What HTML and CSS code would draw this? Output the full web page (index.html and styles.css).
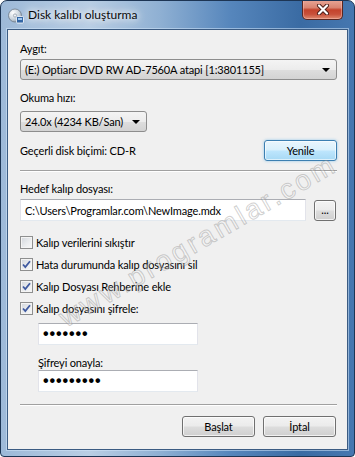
FILE: index.html
```html
<!DOCTYPE html>
<html lang="tr">
<head>
    <meta charset="UTF-8">
    <meta name="viewport" content="width=device-width, initial-scale=1.0">
    <title>Disk kalıbı oluşturma</title>
    <link rel="stylesheet" href="styles.css">
</head>
<body>
    <div class="window">
        <div class="titlebar">
            <svg class="app-icon" width="16" height="16" viewBox="0 0 16 16">
                <defs>
                    <radialGradient id="disc" cx="0.35" cy="0.3" r="0.8">
                        <stop offset="0" stop-color="#ffffff"/>
                        <stop offset="0.6" stop-color="#c9d3dc"/>
                        <stop offset="1" stop-color="#8b98a6"/>
                    </radialGradient>
                </defs>
                <circle cx="7" cy="7.5" r="6.5" fill="url(#disc)" stroke="#6d7a88" stroke-width="0.8"/>
                <circle cx="7" cy="7.5" r="1.6" fill="#eef2f6" stroke="#7d8a97" stroke-width="0.6"/>
                <rect x="8.5" y="8.5" width="7" height="6.5" rx="1" fill="#2f63a3" stroke="#ffffff" stroke-width="0.8"/>
                <rect x="10" y="10" width="4" height="2" fill="#9cc6f0"/>
            </svg>
            <span class="title">Disk kalıbı oluşturma</span>
            <div class="close-btn">
                <svg width="14" height="11" viewBox="0 0 14 11">
                    <path d="M3 1.5 L11 9.5 M11 1.5 L3 9.5" stroke="#4a1d17" stroke-width="4" stroke-linecap="round"/>
                    <path d="M3 1.5 L11 9.5 M11 1.5 L3 9.5" stroke="#ffffff" stroke-width="2.2" stroke-linecap="round"/>
                </svg>
            </div>
        </div>

        <div class="client">
            <div class="label">Aygıt:</div>
            <div class="combo combo-drive">
                <span>(E:) Optiarc DVD RW AD-7560A atapi [1:3801155]</span>
                <i class="arrow"></i>
            </div>

            <div class="label label-speed">Okuma hızı:</div>
            <div class="combo combo-speed">
                <span>24.0x (4234 KB/San)</span>
                <i class="arrow"></i>
            </div>

            <div class="format-row">
                <span>Geçerli disk biçimi: CD-R</span>
                <div class="btn btn-focus">Yenile</div>
            </div>

            <div class="sep"></div>

            <div class="label label-target">Hedef kalıp dosyası:</div>
            <div class="path-row">
                <div class="textbox path-box">C:\Users\Programlar.com\NewImage.mdx</div>
                <div class="btn btn-browse">...</div>
            </div>

            <div class="checks">
                <div class="check-row">
                    <span class="checkbox"></span>
                    <span>Kalıp verilerini sıkıştır</span>
                </div>
                <div class="check-row">
                    <span class="checkbox checked">
                        <svg width="11" height="11" viewBox="0 0 11 11"><path d="M2 5.5 L4.3 8 L9 2.2" fill="none" stroke="#3f5aa0" stroke-width="1.8"/></svg>
                    </span>
                    <span>Hata durumunda kalıp dosyasını sil</span>
                </div>
                <div class="check-row">
                    <span class="checkbox checked">
                        <svg width="11" height="11" viewBox="0 0 11 11"><path d="M2 5.5 L4.3 8 L9 2.2" fill="none" stroke="#3f5aa0" stroke-width="1.8"/></svg>
                    </span>
                    <span>Kalıp Dosyası Rehberine ekle</span>
                </div>
                <div class="check-row">
                    <span class="checkbox checked">
                        <svg width="11" height="11" viewBox="0 0 11 11"><path d="M2 5.5 L4.3 8 L9 2.2" fill="none" stroke="#3f5aa0" stroke-width="1.8"/></svg>
                    </span>
                    <span>Kalıp dosyasını şifrele:</span>
                </div>
            </div>

            <div class="password-block">
                <div class="textbox pwd-box">•••••••</div>
                <div class="label label-confirm">Şifreyi onayla:</div>
                <div class="textbox pwd-box">•••••••••</div>
            </div>

            <div class="sep sep-bottom"></div>

            <div class="actions">
                <div class="btn btn-action">Başlat</div>
                <div class="btn btn-action">İptal</div>
            </div>
        </div>

        <div class="watermark">www.programlar.com</div>
    </div>
</body>
</html>
```

FILE: styles.css
```css
body {
    margin: 0;
    font-family: Lato, 'Open Sans', sans-serif;
    font-size: 11px;
    letter-spacing: -0.15px;
    color: #000;
    background: #fff;
    overflow: hidden;
}

.window {
    position: relative;
    width: 355px;
    height: 457px;
    box-sizing: border-box;
    border: 1px solid #1d3554;
    border-radius: 7px 7px 4px 4px;
    padding: 0 6px 6px 6px;
    display: flex;
    flex-direction: column;
    overflow: hidden;
    background: linear-gradient(90deg, #9db9d8 0%, #b9cee4 25%, #8fb0d3 45%, #5686bc 65%, #3a6ba3 85%, #4677b0 100%);
}

/* title bar */
.titlebar {
    height: 28px;
    display: flex;
    align-items: flex-start;
}

.app-icon {
    margin: 7px 0 0 1px;
}

.title {
    margin: 6px 0 0 4px;
    font-size: 12px;
    line-height: 16px;
    letter-spacing: 0;
    color: #0b0b0b;
    text-shadow: 0 0 6px #fff, 0 0 10px rgba(255, 255, 255, 0.9), 0 0 14px rgba(255, 255, 255, 0.7);
}

.close-btn {
    margin: -1px 5px 0 auto;
    width: 41px;
    height: 20px;
    box-sizing: border-box;
    border: 1px solid #5a2620;
    border-top: none;
    border-radius: 0 0 5px 5px;
    background: linear-gradient(#e9a797 0%, #d98471 40%, #c4432c 52%, #c8503a 75%, #de8a6f 100%);
    box-shadow: inset 0 0 0 1px rgba(255, 200, 190, 0.45);
    display: flex;
    align-items: center;
    justify-content: center;
}

/* client area */
.client {
    flex: 1;
    background: #f0f0f0;
    border: 1px solid #3b5b82;
    box-shadow: 0 0 0 1px rgba(210, 230, 250, 0.55);
    padding: 0 10px 0 12px;
    display: flex;
    flex-direction: column;
}

.label {
    line-height: 15px;
    margin-top: 11px;
}

.label-speed {
    margin-top: 10px;
}

.label-target {
    margin-top: 9px;
}

.combo {
    height: 21px;
    box-sizing: border-box;
    margin-top: 3px;
    border: 1px solid #8d8d8d;
    border-radius: 3px;
    background: linear-gradient(#f4f4f4 0%, #ececec 50%, #dedede 51%, #d3d3d3 100%);
    display: flex;
    align-items: center;
    padding: 0 6px 0 4px;
}

.combo span {
    flex: 1;
    white-space: nowrap;
}

.combo-drive {
    width: 317px;
}

.combo-speed {
    width: 127px;
    margin-top: 6px;
}

.arrow {
    width: 0;
    height: 0;
    border-left: 4px solid transparent;
    border-right: 4px solid transparent;
    border-top: 4px solid #000;
}

.format-row {
    margin-top: 8px;
    height: 21px;
    display: flex;
    align-items: center;
    justify-content: space-between;
}

.btn {
    height: 21px;
    box-sizing: border-box;
    border: 1px solid #707070;
    border-radius: 3px;
    background: linear-gradient(#f3f3f3 0%, #ebebeb 48%, #dddddd 52%, #cfcfcf 100%);
    box-shadow: inset 0 0 0 1px rgba(255, 255, 255, 0.7);
    display: flex;
    align-items: center;
    justify-content: center;
}

.btn-focus {
    width: 73px;
    border-color: #3c7fb1;
    background: linear-gradient(#eaf6fd 0%, #d9f0fc 48%, #bee6fd 52%, #a7d9f5 100%);
    box-shadow: inset 0 0 0 1px rgba(255, 255, 255, 0.6), 0 0 3px rgba(80, 170, 230, 0.6);
}

.sep {
    margin-top: 9px;
    height: 1px;
    background: #a0a0a0;
    border-bottom: 1px solid #fff;
}

.path-row {
    margin-top: 3px;
    display: flex;
    align-items: flex-end;
    gap: 8px;
}

.textbox {
    height: 22px;
    box-sizing: border-box;
    background: #fff;
    border: 1px solid #e2e3ea;
    border-top-color: #abadb3;
    border-bottom-color: #e3e9ef;
    display: flex;
    align-items: center;
    padding-left: 4px;
    white-space: nowrap;
}

.path-box {
    width: 286px;
}

.btn-browse {
    width: 22px;
    padding-bottom: 3px;
}

.checks {
    margin-top: 10px;
}

.check-row {
    height: 22px;
    display: flex;
    align-items: center;
    gap: 3px;
}

.checkbox {
    width: 13px;
    height: 13px;
    box-sizing: border-box;
    border: 1px solid #8e8f8f;
    background: linear-gradient(135deg, #d2d6dc 0%, #eceef0 60%, #f8f8f8 100%);
    box-shadow: inset 0 0 0 1px #f4f4f4;
    display: flex;
    align-items: center;
    justify-content: center;
}

.password-block {
    margin-top: 4px;
    margin-left: 18px;
    display: flex;
    flex-direction: column;
    align-items: flex-start;
}

.pwd-box {
    width: 160px;
    font-family: 'Liberation Sans', Arial, sans-serif;
    font-size: 16px;
    font-weight: bold;
    letter-spacing: 0.9px;
    padding-left: 4px;
}

.label-confirm {
    margin-top: 10px;
}

.sep-bottom {
    margin-top: 12px;
}

.actions {
    margin-top: 10px;
    display: flex;
    justify-content: flex-end;
    gap: 8px;
    padding-right: 1px;
}

.btn-action {
    width: 73px;
}

/* site watermark laid over the dialog */
.watermark {
    position: absolute;
    left: 197px;
    top: 240px;
    transform: translate(-50%, -50%) rotate(-30deg);
    font-family: 'Liberation Sans', Arial, sans-serif;
    font-size: 28px;
    letter-spacing: 3px;
    white-space: nowrap;
    color: rgba(255, 255, 255, 0.25);
    -webkit-text-stroke: 1px rgba(120, 120, 120, 0.35);
    pointer-events: none;
}
```
